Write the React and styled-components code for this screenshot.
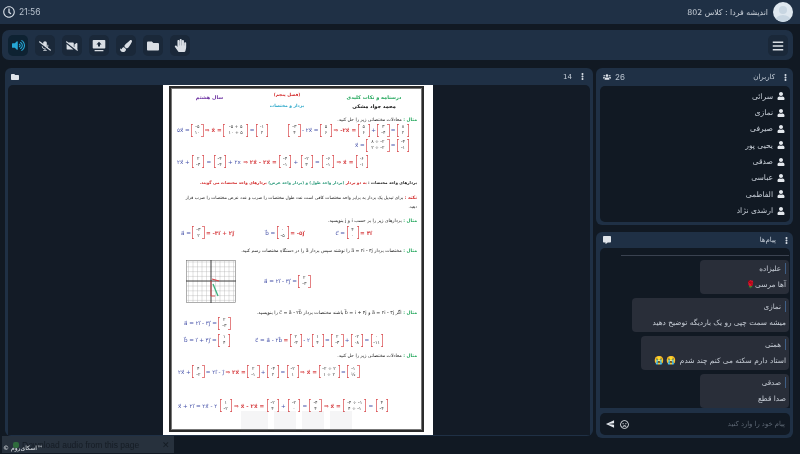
import React from "react";
import styled, { createGlobalStyle } from "styled-components";
import {
  FaVolumeUp, FaMicrophoneSlash, FaVideoSlash, FaPaintBrush, FaFolder, FaHandPaper,
  FaBars, FaUser, FaUsers, FaEllipsisV, FaCommentAlt, FaRegClock, FaRegFrown,
} from "react-icons/fa";
import { IoMdSend } from "react-icons/io";

const Global = createGlobalStyle`
  html, body { margin: 0; padding: 0; background: #111923; }
  body { font-family: "DejaVu Sans", "Noto Sans", sans-serif; overflow: hidden; }
  #root { width: 800px; height: 454px; }
`;

const Shell = styled.div`
  position: relative;
  width: 800px;
  height: 454px;
  overflow: hidden;
  display: flex;
  flex-direction: column;
  background: #111923;
  filter: blur(0.35px);
`;

const TopBar = styled.header`
  height: 24px;
  flex: none;
  display: flex;
  align-items: center;
  justify-content: space-between;
  padding: 0 7px 0 3px;
  background: #1f3045;
  color: #c6ced8;
`;
const Clock = styled.div`
  display: flex;
  align-items: center;
  gap: 4px;
  font: 8.5px "Inter", sans-serif;
  color: #b9c3cf;
  svg { font-size: 12px; color: #d5dce4; }
`;
const Title = styled.div`
  display: flex;
  align-items: center;
  gap: 5px;
  font-size: 7.8px;
`;
const ClassName = styled.span`
  direction: rtl;
  color: #c9d0d9;
`;
const Avatar = styled.span`
  width: 20px;
  height: 20px;
  border-radius: 50%;
  background: #dfe8f0;
  position: relative;
  overflow: hidden;
  display: block;
  &::before {
    content: "";
    position: absolute;
    left: 6px; top: 4px;
    width: 8px; height: 8px;
    border-radius: 50%;
    background: #c8d6e2;
  }
  &::after {
    content: "";
    position: absolute;
    left: 2px; top: 13px;
    width: 16px; height: 12px;
    border-radius: 50%;
    background: #c8d6e2;
  }
`;

const Toolbar = styled.nav`
  flex: none;
  height: 30px;
  margin: 6px 7px 0 2px;
  padding: 5px 5px 4px 6px;
  box-sizing: border-box;
  display: flex;
  align-items: center;
  justify-content: space-between;
  background: #1f3045;
  border-radius: 7px;
`;
const ToolGroup = styled.div`
  display: flex;
  gap: 7px;
`;
const ToolButton = styled.button`
  width: 20px;
  height: 21px;
  padding: 0;
  border: 0;
  border-radius: 5px;
  display: flex;
  align-items: center;
  justify-content: center;
  background: ${(p) => (p.$active ? "#0e2232" : "#1a2839")};
  color: ${(p) => (p.$active ? "#26a7d6" : "#d9dee4")};
  font-size: ${(p) => p.$size || 12}px;
`;

const Content = styled.main`
  flex: 1;
  min-height: 0;
  display: flex;
  gap: 3px;
  margin: 8px 6px 16px 5px;
`;
const MainPanel = styled.section`
  flex: none;
  width: 588px;
  height: 368px;
  box-sizing: border-box;
  padding: 0 3px 3px;
  display: flex;
  flex-direction: column;
  background: #1f3045;
  border-radius: 6px;
`;
const PanelHead = styled.div`
  flex: none;
  height: ${(p) => p.$h || 17}px;
  display: flex;
  align-items: center;
  justify-content: space-between;
  padding: 0 ${(p) => p.$pr ?? 4}px 0 3px;
  font-size: 7px;
  color: #c8d0da;
`;
const HeadStart = styled.span`
  display: flex;
  align-items: center;
  gap: 4px;
  font-family: "Inter", sans-serif;
  font-size: 8px;
  color: #b9c3cf;
  svg { font-size: 8px; color: #dfe4ea; }
`;
const HeadEnd = styled.span`
  display: flex;
  align-items: center;
  gap: 7px;
  direction: ltr;
  color: #c8d0da;
  svg { font-size: 7px; color: #cfd6df; }
`;
const Stage = styled.div`
  flex: 1;
  position: relative;
  background: #131b26;
  border-radius: 5px 5px 0 0;
  display: flex;
  justify-content: flex-start;
  padding-left: 155px;
`;

const Paper = styled.article`
  width: 270px;
  height: 350px;
  flex: none;
  box-sizing: border-box;
  padding: 1px 9px 3px 6px;
  background: #fff;
`;
const Frame = styled.div`
  height: 100%;
  box-sizing: border-box;
  border: 2px solid #2b2b2b;
  outline: 0.5px solid #777;
  outline-offset: -3px;
  padding: 0 5px;
  display: flex;
  flex-direction: column;
  color: #222;
  font-size: 4.6px;
  direction: rtl;
  overflow: hidden;
  filter: blur(0.2px);
`;
const HeadGrid = styled.div`
  display: grid;
  grid-template-columns: 86px 88px 1fr;
  height: 24px;
  padding-top: 4px;
  box-sizing: content-box;
  text-align: center;
  font-weight: bold;
`;
const HeadCol = styled.div`
  display: flex;
  flex-direction: column;
  gap: ${(p) => p.$gap || 3}px;
  padding-top: ${(p) => p.$pt || 0}px;
`;
const Tone = styled.span`
  color: ${(p) => p.$c};
  font-size: ${(p) => p.$s || 4.6}px;
  font-weight: ${(p) => p.$w || "inherit"};
`;
const Note = styled.div`
  margin-top: ${(p) => p.$mt || 0}px;
  line-height: 6px;
  font-size: ${(p) => p.$s || 4.6}px;
  font-weight: ${(p) => p.$w || "normal"};
  white-space: nowrap;
  text-align: right;
`;
const EqRow = styled.div`
  direction: ltr;
  display: flex;
  align-items: center;
  justify-content: ${(p) => p.$j || "flex-start"};
  gap: ${(p) => p.$gap || 0}px;
  margin-top: ${(p) => p.$mt || 0}px;
  padding-left: ${(p) => p.$pl || 0}px;
  padding-right: ${(p) => p.$pr || 0}px;
  height: ${(p) => p.$h || 16}px;
  flex: none;
`;
const Eq = styled.span`
  display: inline-flex;
  align-items: center;
  gap: ${(p) => p.$gap || 1.5}px;
  font-family: "DejaVu Sans", sans-serif;
  font-size: 5.6px;
  white-space: nowrap;
  color: #4450a8;
`;
const Red = styled.span`
  color: #d8474a;
  font-weight: bold;
`;
const MatrixBox = styled.span`
  --b: ${(p) => p.$c || "#d8474a"};
  display: inline-flex;
  flex-direction: column;
  align-items: center;
  justify-content: center;
  min-width: ${(p) => p.$w || 9}px;
  padding: 0 1.5px;
  height: 13px;
  line-height: 5.8px;
  font-size: 4.6px;
  color: #444;
  background:
    linear-gradient(var(--b), var(--b)) left top / 0.7px 100% no-repeat,
    linear-gradient(var(--b), var(--b)) right top / 0.7px 100% no-repeat,
    linear-gradient(var(--b), var(--b)) left top / 2px 0.7px no-repeat,
    linear-gradient(var(--b), var(--b)) left bottom / 2px 0.7px no-repeat,
    linear-gradient(var(--b), var(--b)) right top / 2px 0.7px no-repeat,
    linear-gradient(var(--b), var(--b)) right bottom / 2px 0.7px no-repeat;
`;
const Mat = ({ a, b, w, c }) => (
  <MatrixBox $w={w} $c={c}>
    <span>{a}</span>
    <span>{b}</span>
  </MatrixBox>
);
const GraphRow = styled.div`
  direction: ltr;
  display: flex;
  align-items: center;
  gap: 28px;
  margin-top: 6px;
  height: 42px;
  padding-left: 10px;
`;
const Ghosts = styled.div`
  position: absolute;
  left: 233px;
  top: 326px;
  display: flex;
  gap: 6px;
`;
const Ghost = styled.span`
  width: ${(p) => p.$w}px;
  height: 20px;
  background: rgba(120, 120, 130, 0.07);
`;

const Side = styled.aside`
  flex: none;
  width: 197px;
  display: flex;
  flex-direction: column;
  gap: 7px;
  height: 370px;
`;
const SidePanel = styled.section`
  flex: ${(p) => (p.$grow ? 1 : "none")};
  height: ${(p) => p.$h || "auto"};
  box-sizing: border-box;
  min-height: 0;
  display: flex;
  flex-direction: column;
  padding: 0 3px 3px 4px;
  background: #1f3045;
  border-radius: 6px;
`;
const UserBox = styled.ul`
  flex: 1;
  margin: 0;
  padding: 2px 5px 0 0;
  list-style: none;
  background: #111923;
  border-radius: 5px;
`;
const UserRow = styled.li`
  height: 16.35px;
  display: flex;
  align-items: center;
  justify-content: flex-end;
  gap: 4px;
  font-size: 7.6px;
  color: #c7ced7;
  direction: ltr;
  svg { font-size: 8px; color: #e4e8ed; }
`;
const Messages = styled.div`
  flex: 1;
  min-height: 0;
  display: flex;
  flex-direction: column;
  align-items: flex-end;
  gap: 4.5px;
  padding: 0 1px 0 0;
  background: #111923;
  border-radius: 5px 5px 0 0;
  overflow: hidden;
`;
const Clipped = styled.div`
  width: 168px;
  height: 1px;
  margin-top: 7px;
  margin-bottom: -0.5px;
  background: #3a4250;
`;
const Bubble = styled.div`
  width: ${(p) => p.$w}px;
  height: 33.5px;
  flex: none;
  box-sizing: border-box;
  padding: 3px 3px 0 4px;
  background: #292e39;
  border-radius: 4px;
  direction: rtl;
  display: flex;
  flex-direction: column;
  gap: 6px;
  color: #c6ccd5;
  font-size: 7.4px;
`;
const Sender = styled.span`
  border-right: 1px solid #3f5f86;
  padding-right: 4px;
  line-height: 11px;
  font-size: 7.2px;
`;
const BodyText = styled.span`
  line-height: 10px;
  white-space: nowrap;
`;
const Emoji = styled.span`
  font-family: "Noto Color Emoji", "Noto Sans", sans-serif;
  font-size: 8px;
  margin-right: 3px;
`;
const Composer = styled.div`
  flex: none;
  height: 22px;
  margin-top: 5px;
  padding: 0 5px 0 5px;
  box-sizing: border-box;
  display: flex;
  align-items: center;
  justify-content: space-between;
  background: #111923;
  border-radius: 5px;
`;
const ComposerIcons = styled.span`
  display: flex;
  align-items: center;
  gap: 5px;
  color: #e4e8ed;
  svg { display: block; }
`;
const Placeholder = styled.span`
  direction: rtl;
  font-size: 6.8px;
  color: #5f6976;
`;

const Banner = styled.div`
  position: absolute;
  left: 2px;
  bottom: 1px;
  width: 172px;
  height: 17px;
  box-sizing: border-box;
  padding: 0 4px 0 11px;
  display: flex;
  align-items: center;
  gap: 3px;
  background: #27313d;
  font: 8.5px "Liberation Sans", sans-serif;
  color: #151c24;
`;
const BannerDot = styled.span`
  width: 6px;
  height: 6px;
  border-radius: 2px;
  background: #2f6b3c;
`;
const BannerClose = styled.span`
  margin-left: auto;
`;
const Brand = styled.div`
  position: absolute;
  left: 3px;
  bottom: 3px;
  font-size: 6px;
  color: #e7ebef;
  direction: ltr;
`;

const users = ["سرائی", "نمازی", "صیرفی", "یحیی پور", "صدقی", "عباسی", "الفاطمی", "ارشدی نژاد"];

const ScreenIcon = () => (
  <svg width="14" height="13" viewBox="0 0 14 13" fill="currentColor">
    <path d="M1.5 1h11a.8.8 0 0 1 .8.8v7a.8.8 0 0 1-.8.8h-11a.8.8 0 0 1-.8-.8v-7a.8.8 0 0 1 .8-.8z" />
    <rect x="2.5" y="11" width="9" height="1.2" rx=".5" />
    <path d="M7 2.8 9.6 5.6H8v2H6v-2H4.4z" fill="#1a2839" />
  </svg>
);

const Graph = () => (
  <svg width="50" height="43" viewBox="0 0 50 43">
    <rect x="0.5" y="0.5" width="49" height="42" fill="#fff" stroke="#777" strokeWidth="0.6" />
    {Array.from({ length: 11 }, (_, i) => (
      <line key={`v${i}`} x1={i * 4.5 + 2.5} x2={i * 4.5 + 2.5} y1="0" y2="43" stroke="#aaa" strokeWidth="0.35" />
    ))}
    {Array.from({ length: 9 }, (_, i) => (
      <line key={`h${i}`} y1={i * 4.8 + 2} y2={i * 4.8 + 2} x1="0" x2="50" stroke="#aaa" strokeWidth="0.35" />
    ))}
    <line x1="25" x2="25" y1="0" y2="43" stroke="#222" strokeWidth="0.8" />
    <line x1="0" x2="50" y1="21" y2="21" stroke="#222" strokeWidth="0.8" />
    <path d="M26 19 L33 21" stroke="#d8474a" strokeWidth="1.2" />
    <path d="M25 21 L25 36 L29 36" stroke="#d8474a" strokeWidth="0.9" fill="none" />
    <path d="M27 24 L32 36" stroke="#3ab27d" strokeWidth="1.3" />
  </svg>
);

export default function App() {
  return (
    <Shell>
      <Global />
      <TopBar>
        <Clock><FaRegClock />21:56</Clock>
        <Title>
          <ClassName>اندیشه فردا : کلاس 802</ClassName>
          <Avatar />
        </Title>
      </TopBar>

      <Toolbar>
        <ToolGroup>
          <ToolButton $active $size={13}><FaVolumeUp /></ToolButton>
          <ToolButton><FaMicrophoneSlash /></ToolButton>
          <ToolButton><FaVideoSlash /></ToolButton>
          <ToolButton><ScreenIcon /></ToolButton>
          <ToolButton><FaPaintBrush /></ToolButton>
          <ToolButton><FaFolder /></ToolButton>
          <ToolButton $size={13}><FaHandPaper /></ToolButton>
        </ToolGroup>
        <ToolButton $size={12}><FaBars /></ToolButton>
      </Toolbar>

      <Content>
        <MainPanel>
          <PanelHead>
            <HeadStart><FaFolder /></HeadStart>
            <HeadEnd>14 <FaEllipsisV /></HeadEnd>
          </PanelHead>
          <Stage>
            <Paper>
              <Frame>
                <HeadGrid>
                  <HeadCol $pt={2} $gap={3}>
                    <Tone $c="#23a75c" $s={5}>درسنامه و نکات کلیدی</Tone>
                    <Tone $c="#111" $s={5}>محمد جواد مشکی</Tone>
                  </HeadCol>
                  <HeadCol $gap={6}>
                    <Tone $c="#d32a2a" $s={4.4}>(فصل پنجم)</Tone>
                    <Tone $c="#2ba7c9" $s={4.4}>بردار و مختصات</Tone>
                  </HeadCol>
                  <HeadCol $pt={2}>
                    <Tone $c="#6b2fa0" $s={5}>سال هشتم</Tone>
                  </HeadCol>
                </HeadGrid>
                <Note $mt={1}><Tone $c="#23a75c" $w="bold">مثال :</Tone> معادلات مختصاتی زیر را حل کنید.</Note>
                <EqRow $j="space-between" $pl={1} $pr={8} $h={14}>
                  <Eq>۵x⃗ = <Mat a="-۵" b="۱۰" /> <Red>⇒ x⃗ =</Red> <Mat a="-۵ + ۵" b="۱۰ + ۵" w={22} /> = <Mat a="-۱" b="۲" /></Eq>
                  <Eq><Mat a="-۳" b="۴" /> - ۲x⃗ = <Mat a="۵" b="۶" /> <Red>⇒ -۲x⃗ =</Red> <Mat a="۵" b="۶" /> + <Mat a="۳" b="-۴" /> = <Mat a="۸" b="۲" /></Eq>
                </EqRow>
                <EqRow $j="flex-end" $pr={8} $h={14} $mt={1}>
                  <Eq>x⃗ = <Mat a="۸ ÷ -۲" b="۲ ÷ -۲" w={20} /> = <Mat a="-۴" b="-۱" /></Eq>
                </EqRow>
                <EqRow $pl={1} $h={15} $mt={2}>
                  <Eq $gap={2.4}>۲x⃗ + <Mat a="۲" b="-۳" /> = <Mat a="-۴" b="-۴" /> + ۲x <Red>⇒ ۲x⃗ - ۲x⃗ =</Red> <Mat a="-۴" b="-۱" /> + <Mat a="-۲" b="۳" /> = <Mat a="-۶" b="-۱" /> <Red>⇒ x⃗ =</Red> <Mat a="-۶" b="-۱" /></Eq>
                </EqRow>
                <Note $mt={11} $w="bold" $s={4}>بردارهای واحد مختصات : <Tone $c="#d32a2a" $s={4}>به دو بردار</Tone> <Tone $c="#2a9a7a" $s={4}>(بردار واحد طول) و (بردار واحد عرض)</Tone> <Tone $c="#d32a2a" $s={4}>بردارهای واحد مختصات می گویند.</Tone></Note>
                <Note $mt={9} $s={4.4}><Tone $c="#d32a2a" $w="bold">نکته :</Tone> برای تبدیل یک بردار به برابر واحد مختصات کافی است عدد طول مختصات را ضرب و عدد عرض مختصات را ضرب قرار</Note>
                <Note $mt={3} $s={4}>دهید.</Note>
                <Note $mt={8}><Tone $c="#23a75c" $w="bold">مثال :</Tone> بردارهای زیر را بر حسب i و j بنویسید.</Note>
                <EqRow $j="space-between" $pl={5} $pr={45} $h={15} $mt={1}>
                  <Eq>a⃗ = <Mat a="-۳" b="۲" /> <Red>= -۳i⃗ + ۲j⃗</Red></Eq>
                  <Eq>b⃗ = <Mat a="۰" b="-۵" /> <Red>= -۵j⃗</Red></Eq>
                  <Eq>c⃗ = <Mat a="۴" b="۰" /> <Red>= ۴i⃗</Red></Eq>
                </EqRow>
                <Note $mt={8}><Tone $c="#23a75c" $w="bold">مثال :</Tone> مختصات بردار a⃗ = ۲i - ۳j را نوشته سپس بردار a⃗ را در دستگاه مختصات رسم کنید.</Note>
                <GraphRow>
                  <Graph />
                  <Eq>a⃗ = ۲i⃗ - ۳j⃗ = <Mat a="۲" b="-۳" /></Eq>
                </GraphRow>
                <Note $mt={8} $s={4.7}><Tone $c="#23a75c" $w="bold">مثال :</Tone> اگر a⃗ = ۲i - ۳j و b⃗ = i + ۴j باشند مختصات بردار c⃗ = a⃗ - ۲b⃗ را بنویسید.</Note>
                <EqRow $gap={23} $pl={8} $h={14}>
                  <Eq>a⃗ = ۲i⃗ - ۳j⃗ = <Mat a="۲" b="-۳" /></Eq>
                </EqRow>
                <EqRow $pl={8} $gap={25} $h={14} $mt={3}>
                  <Eq>b⃗ = i⃗ + ۴j⃗ = <Mat a="۱" b="۴" /></Eq>
                  <Eq>c⃗ = a⃗ - ۲b⃗ <Red>=</Red> <Mat a="۲" b="-۳" /> - ۲<Mat a="۱" b="۴" /> = <Mat a="۲" b="-۳" /> + <Mat a="-۲" b="-۸" /> = <Mat a="۰" b="-۱۱" /></Eq>
                </EqRow>
                <Note $mt={6}><Tone $c="#23a75c" $w="bold">مثال :</Tone> معادلات مختصاتی زیر را حل کنید.</Note>
                <EqRow $pl={2} $h={17} $mt={4}>
                  <Eq>۲x⃗ + <Mat a="۴" b="-۲" /> = ۲i⃗ - j⃗ <Red>⇒ ۲x⃗ =</Red> <Mat a="۲" b="-۱" /> + <Mat a="-۴" b="۲" /> = <Mat a="-۲" b="۱" /> <Red>⇒ x⃗ =</Red> <Mat a="-۲ ÷ ۲" b="۱ ÷ ۲" w={18} /> = <Mat a="-۱" b="½" /></Eq>
                </EqRow>
                <EqRow $pl={2} $h={17} $mt={17}>
                  <Eq $gap={2.4}>x⃗ + ۲i⃗ = ۲x⃗ - ۲<Mat a="۱" b="-۲" /> <Red>⇒ x⃗ - ۲x⃗ =</Red> <Mat a="-۲" b="۴" /> + <Mat a="-۲" b="۰" /> = <Mat a="-۴" b="۴" /> <Red>⇒ x⃗ =</Red> <Mat a="-۴ ÷ -۱" b="۴ ÷ -۱" w={20} /> = <Mat a="۴" b="-۴" /></Eq>
                </EqRow>
              </Frame>
            </Paper>
            <Ghosts>
              <Ghost $w={27} />
              <Ghost $w={22} />
              <Ghost $w={22} />
              <Ghost $w={22} />
            </Ghosts>
          </Stage>
        </MainPanel>

        <Side>
          <SidePanel $h="157px">
            <PanelHead $h={18} $pr={1}>
              <HeadStart><FaUsers />26</HeadStart>
              <HeadEnd>کاربران <FaEllipsisV /></HeadEnd>
            </PanelHead>
            <UserBox>
              {users.map((u) => (
                <UserRow key={u}><span dir="rtl">{u}</span><FaUser /></UserRow>
              ))}
            </UserBox>
          </SidePanel>

          <SidePanel $grow>
            <PanelHead $h={16} $pr={0}>
              <HeadStart><FaCommentAlt /></HeadStart>
              <HeadEnd>پیام‌ها <FaEllipsisV /></HeadEnd>
            </PanelHead>
            <Messages>
              <Clipped />
              <Bubble $w={89}><Sender>علیزاده</Sender><BodyText>آها مرسی🌹</BodyText></Bubble>
              <Bubble $w={157}><Sender>نمازی</Sender><BodyText>میشه سمت چپی رو یک باردیگه توضیح دهید</BodyText></Bubble>
              <Bubble $w={148}><Sender>همتی</Sender><BodyText>استاد دارم سکته می کنم چند شدم<Emoji>😭</Emoji><Emoji>😭</Emoji></BodyText></Bubble>
              <Bubble $w={89}><Sender>صدقی</Sender><BodyText>صدا قطع</BodyText></Bubble>
            </Messages>
            <Composer>
              <ComposerIcons>
                <IoMdSend size={10} style={{ transform: "scaleX(-1)" }} />
                <FaRegFrown size={9} />
              </ComposerIcons>
              <Placeholder>پیام خود را وارد کنید</Placeholder>
            </Composer>
          </SidePanel>
        </Side>
      </Content>

      <Banner><BannerDot /><span>Download audio from this page</span><BannerClose>✕</BannerClose></Banner>
      <Brand>© اسکای‌روم™</Brand>
    </Shell>
  );
}
